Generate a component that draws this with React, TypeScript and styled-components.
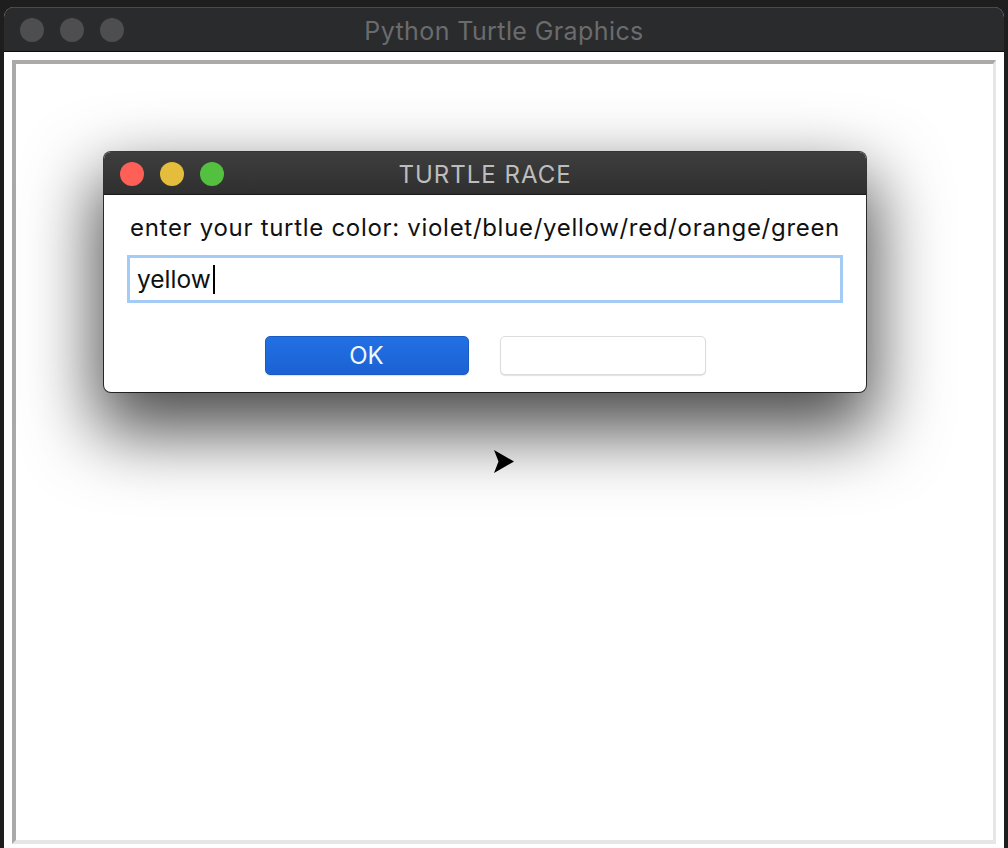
import React from "react";
import styled, { createGlobalStyle } from "styled-components";

const GlobalStyle = createGlobalStyle`
  html, body {
    margin: 0;
    padding: 0;
    background: #1e1e1f;
    overflow: hidden;
  }
  body {
    font-family: Inter, "Liberation Sans", Arial, sans-serif;
  }
`;

const Page = styled.div`
  width: 1008px;
  height: 848px;
  padding: 7px 4px 0 4px;
  box-sizing: border-box;
  position: relative;
`;

const Window = styled.div`
  width: 1000px;
  height: 845px;
  background: #ffffff;
  border-radius: 10px 10px 0 0;
  overflow: hidden;
  display: flex;
  flex-direction: column;
`;

const TitleBar = styled.div`
  height: 45px;
  flex: none;
  box-sizing: border-box;
  background: #2a2b2d;
  border-top: 1px solid #4a4a4c;
  border-bottom: 1px solid #0c0c0c;
  display: flex;
  align-items: center;
  position: relative;
  padding-left: 16px;
  gap: 16px;
`;

const Light = styled.span<{ $color: string }>`
  width: 24px;
  height: 24px;
  border-radius: 50%;
  background: ${(p) => p.$color};
  flex: none;
`;

const WindowTitle = styled.div`
  position: absolute;
  inset: 0;
  display: flex;
  align-items: center;
  justify-content: center;
  color: #6b6b6d;
  font-size: 25px;
  letter-spacing: 0.4px;
  padding-top: 2px;
`;

const Content = styled.div`
  flex: 1;
  padding: 8px 8px 0 8px;
`;

const Canvas = styled.div`
  width: 984px;
  height: 784px;
  box-sizing: border-box;
  border-top: 4px solid #aaaaaa;
  border-left: 4px solid #aaaaaa;
  border-right: 3px solid #e6e6e6;
  border-bottom: 4px solid #e6e6e6;
  background: #ffffff;
`;

const Turtle = styled.svg`
  position: absolute;
  left: 494px;
  top: 450px;
`;

const Dialog = styled.div`
  position: absolute;
  left: 104px;
  top: 152px;
  width: 762px;
  height: 240px;
  box-sizing: border-box;
  border-radius: 7px;
  background: #ffffff;
  overflow: hidden;
  box-shadow: 0 0 0 1px rgba(0, 0, 0, 0.75), 0 32px 70px 8px rgba(0, 0, 0, 0.7);
  display: flex;
  flex-direction: column;
`;

const DialogBar = styled.div`
  height: 43px;
  flex: none;
  box-sizing: border-box;
  background: linear-gradient(#3e3e3e, #2f2f2f);
  border-bottom: 1px solid #1a1a1a;
  display: flex;
  align-items: center;
  padding-left: 16px;
  padding-top: 2px;
  gap: 16px;
  position: relative;
`;

const DialogTitle = styled.div`
  position: absolute;
  inset: 0;
  display: flex;
  align-items: center;
  justify-content: center;
  color: #bdbdbd;
  font-size: 24px;
  letter-spacing: 1px;
  padding-top: 3px;
`;

const DialogBody = styled.div`
  flex: 1;
  padding: 19px 23px 0 23px;
  display: flex;
  flex-direction: column;
`;

const Prompt = styled.div`
  font-size: 24px;
  line-height: 28px;
  letter-spacing: 0.7px;
  color: #111;
  text-align: center;
  white-space: nowrap;
  margin-bottom: 13px;
`;

const Field = styled.div`
  height: 48px;
  box-sizing: border-box;
  border: 3px solid #a4cbf5;
  background: #fff;
  display: flex;
  align-items: center;
  padding-left: 7px;
  font-size: 24.5px;
  color: #111;
`;

const Caret = styled.span`
  display: inline-block;
  width: 2px;
  height: 29px;
  background: #000;
  margin-left: 2px;
`;

const Buttons = styled.div`
  display: flex;
  justify-content: center;
  gap: 31px;
  margin-top: 33px;
`;

const Button = styled.div<{ $primary?: boolean }>`
  width: ${(p) => (p.$primary ? 204 : 206)}px;
  height: 39px;
  box-sizing: border-box;
  border-radius: 5px;
  display: flex;
  align-items: center;
  justify-content: center;
  font-size: 24px;
  color: ${(p) => (p.$primary ? "#f2f6fd" : "#111")};
  background: ${(p) => (p.$primary ? "linear-gradient(#2270e4, #1b62d3)" : "#ffffff")};
  border: 1px solid ${(p) => (p.$primary ? "#1a5bc4" : "#dcdcdc")};
  box-shadow: 0 1px 1px rgba(0, 0, 0, 0.12);
`;

export default function App() {
  return (
    <>
      <GlobalStyle />
      <Page>
        <Window>
          <TitleBar>
            <Light $color="#4e4e50" />
            <Light $color="#4e4e50" />
            <Light $color="#4e4e50" />
            <WindowTitle>Python Turtle Graphics</WindowTitle>
          </TitleBar>
          <Content>
            <Canvas />
          </Content>
        </Window>
        <Turtle width="21" height="23" viewBox="0 0 21 23">
          <polygon points="20,11.5 0,0 4.5,11.5 0,23" fill="#000" />
        </Turtle>
        <Dialog>
          <DialogBar>
            <Light $color="#fe5f57" />
            <Light $color="#e5bd3c" />
            <Light $color="#53c13f" />
            <DialogTitle>TURTLE RACE</DialogTitle>
          </DialogBar>
          <DialogBody>
            <Prompt>enter your turtle color: violet/blue/yellow/red/orange/green</Prompt>
            <Field>
              yellow
              <Caret />
            </Field>
            <Buttons>
              <Button $primary>OK</Button>
              <Button />
            </Buttons>
          </DialogBody>
        </Dialog>
      </Page>
    </>
  );
}
